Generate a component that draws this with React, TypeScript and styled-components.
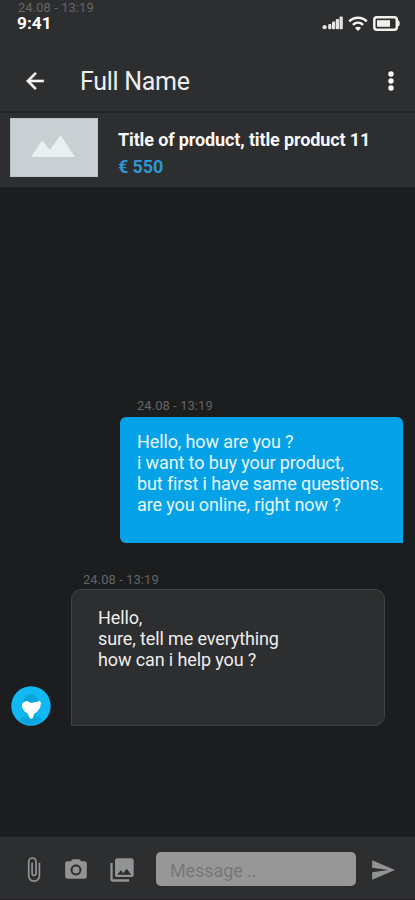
import React from "react";
import styled, { createGlobalStyle } from "styled-components";

const Global = createGlobalStyle`
  * { box-sizing: border-box; }
  body { margin: 0; background: #1c1d1e; font-family: Roboto, sans-serif; }
`;

const Screen = styled.main`
  width: 415px;
  height: 900px;
  display: flex;
  flex-direction: column;
  overflow: hidden;
  background: #1c1d1e;
`;

const Header = styled.header`
  height: 113px;
  flex: none;
  background: #2d2e2f;
  border-bottom: 2px solid #222324;
`;

const StatusBar = styled.div`
  height: 50px;
  padding: 1px 15px 0 17px;
  display: flex;
  justify-content: space-between;
`;

const Stamp = styled.time<{ $indent?: number }>`
  display: block;
  height: 14px;
  padding-left: ${(p) => p.$indent ?? 0}px;
  font-size: 12.9px;
  line-height: 14px;
  letter-spacing: 0.1px;
  color: #656667;
  white-space: nowrap;
`;

const Clock = styled.div`
  font-size: 17.3px;
  line-height: 17px;
  font-weight: 700;
  color: #fff;
`;

const StatusIcons = styled.div`
  display: flex;
  align-items: center;
  gap: 5px;
  height: 16px;
  margin-top: 14px;
`;

const NavBar = styled.nav`
  height: 61px;
  padding: 0 12px 0 22px;
  display: flex;
  align-items: center;
`;

const IconButton = styled.button`
  display: flex;
  padding: 0;
  border: 0;
  background: none;
  color: inherit;
`;

const Name = styled.h1`
  flex: 1;
  margin: 2px 0 0 32px;
  font-size: 25px;
  line-height: 30px;
  font-weight: 400;
  letter-spacing: -0.3px;
  color: #eee;
`;

const Product = styled.section`
  height: 74px;
  flex: none;
  display: flex;
  padding: 5px 10px;
  background: #2d2e2f;
`;

const Thumb = styled.div`
  width: 88px;
  height: 59px;
  display: flex;
  background: #c8d0d4;
  border: 1px solid #bcc2c5;
`;

const ProductInfo = styled.div`
  margin: 8px 0 0 20px;
  font-size: 18px;
  font-weight: 700;
  line-height: 27px;
  letter-spacing: -0.13px;
  white-space: nowrap;
`;

const Title = styled.div`
  color: #f7f7f7;
`;

const Price = styled.div`
  color: #2d96d3;
`;

const Chat = styled.section`
  flex: 1;
  padding: 212px 12px 0 11px;
`;

const Sent = styled.article`
  margin-left: 109px;
`;

const Bubble = styled.div<{ $own?: boolean }>`
  width: ${(p) => (p.$own ? 283 : 314)}px;
  height: ${(p) => (p.$own ? 126 : 137)}px;
  margin-top: ${(p) => (p.$own ? 4 : 2)}px;
  padding: ${(p) => (p.$own ? "14px 17px" : "17px 26px")};
  border: ${(p) => (p.$own ? "0" : "1px solid #404142")};
  border-radius: ${(p) => (p.$own ? "6px 6px 0 6px" : "10px 10px 10px 0")};
  background: ${(p) => (p.$own ? "#06a2e7" : "#2d2e2f")};
  color: ${(p) => (p.$own ? "#e6f6ff" : "#ededed")};
  font-size: 18px;
  line-height: 21px;
  letter-spacing: -0.12px;
  white-space: pre;
`;

const Received = styled.article`
  margin-top: 30px;
  display: flex;
  align-items: flex-end;
  gap: 20px;
`;

const Avatar = styled.div`
  width: 40px;
  height: 40px;
  display: flex;
`;

const Composer = styled.footer`
  height: 63px;
  flex: none;
  display: flex;
  align-items: center;
  padding: 1px 16px 0 20px;
  background: #2d2e2f;
  color: #929394;
  border-bottom: 1px solid #2b2028;
`;

const Tools = styled.div`
  display: flex;
  align-items: center;
  gap: 16px;
  padding-top: 2px;
`;

const GalleryButton = styled(IconButton)`
  margin-left: 3px;
`;

const Field = styled.input`
  width: 200px;
  height: 34px;
  margin: 1px 14px 0 20px;
  padding: 3px 13px 0 14px;
  border: 0;
  border-radius: 5px;
  background: #979797;
  font: 18px Roboto, sans-serif;
  letter-spacing: -0.1px;
  &::placeholder { color: #777; opacity: 1; }
`;

const SendButton = styled(IconButton)`
  margin-top: 2px;
`;

function Glyph({ d, size = 26 }: { d: string; size?: number }) {
  return (
    <svg width={size} height={size} viewBox="0 0 24 24" fill="currentColor">
      <path d={d} />
    </svg>
  );
}

const paths = {
  back: "M20 11H7.83l5.59-5.59L12 4l-8 8 8 8 1.41-1.41L7.83 13H20v-2z",
  clip: "M16.5 6v11.5c0 2.21-1.79 4-4 4s-4-1.79-4-4V5c0-1.38 1.12-2.5 2.5-2.5s2.5 1.12 2.5 2.5v10.5c0 .55-.45 1-1 1s-1-.45-1-1V6H10v9.5c0 1.38 1.12 2.5 2.5 2.5s2.5-1.12 2.5-2.5V5c0-2.21-1.79-4-4-4S7 2.79 7 5v12.5c0 3.04 2.46 5.5 5.5 5.5s5.5-2.46 5.5-5.5V6h-1.5z",
  camera: "M12 8.8a3.2 3.2 0 1 0 0 6.4 3.2 3.2 0 0 0 0-6.4zM9 2 7.17 4H4c-1.1 0-2 .9-2 2v12c0 1.1.9 2 2 2h16c1.1 0 2-.9 2-2V6c0-1.1-.9-2-2-2h-3.17L15 2H9zm3 15c-2.76 0-5-2.24-5-5s2.24-5 5-5 5 2.24 5 5-2.24 5-5 5z",
  gallery: "M22 16V4c0-1.1-.9-2-2-2H8c-1.1 0-2 .9-2 2v12c0 1.1.9 2 2 2h12c1.1 0 2-.9 2-2zm-11-4 2.03 2.71L16 11l4 5H8l3-4zM2 6v14c0 1.1.9 2 2 2h14v-2H4V6H2z",
  send: "M2.01 21 23 12 2.01 3 2 10l15 2-15 2z",
};

export default function App() {
  return (
    <>
      <Global />
      <Screen>
        <Header>
          <StatusBar>
            <div>
              <Stamp $indent={1}>24.08 - 13:19</Stamp>
              <Clock>9:41</Clock>
            </div>
            <StatusIcons>
              <svg width="21" height="14" viewBox="0 0 21 14" fill="#e4e4e4">
                <circle cx="2.6" cy="11.2" r="2.1" />
                <rect x="6.2" y="8" width="3.2" height="5.2" rx="1" />
                <rect x="10" y="5.5" width="3.2" height="7.7" rx="1" />
                <rect x="13.8" y="3" width="3.2" height="10.2" rx="1" />
                <rect x="17.5" y="0.5" width="3.3" height="12.7" rx="1" />
              </svg>
              <svg width="20" height="15" viewBox="0 0 20 15" fill="none" stroke="#f3f3f3">
                <path d="M1.2 5.3C6.3.4 13.7.4 18.8 5.3" strokeWidth="2.5" />
                <path d="M4.9 8.8C7.9 6 12.1 6 15.1 8.8" strokeWidth="2.5" />
                <path d="M7 12C8.8 10.2 11.2 10.2 13 12L10 15z" fill="#f3f3f3" stroke="none" />
              </svg>
              <svg width="27" height="15" viewBox="0 0 27 15">
                <rect x="1.3" y="1.3" width="22.5" height="12.4" rx="2.5" fill="none" stroke="#f1f1ec" strokeWidth="2.5" />
                <rect x="4" y="4.2" width="13" height="6.6" fill="#f1f1ec" />
                <path d="M24.5 4c1.8.4 2.2 2 2.2 3.4s-.4 2.9-2.2 3.3z" fill="#f1f1ec" />
              </svg>
            </StatusIcons>
          </StatusBar>
          <NavBar>
            <IconButton aria-label="Back">
              <svg width="26" height="26" viewBox="0 0 24 24" fill="#f4f4f4" stroke="#f4f4f4" strokeWidth=".5">
                <path d={paths.back} />
              </svg>
            </IconButton>
            <Name>Full Name</Name>
            <IconButton aria-label="More">
              <svg width="24" height="28" viewBox="0 0 24 28" fill="#fff">
                <circle cx="12" cy="7" r="2.7" />
                <circle cx="12" cy="14" r="2.7" />
                <circle cx="12" cy="21" r="2.7" />
              </svg>
            </IconButton>
          </NavBar>
        </Header>
        <Product>
          <Thumb>
            <svg width="86" height="57" viewBox="0 0 86 57" fill="#eaf0f1">
              <path d="M20 38L31 21.5 39 31 49.5 16 64 38z" />
            </svg>
          </Thumb>
          <ProductInfo>
            <Title>Title of product, title product 11</Title>
            <Price>€ 550</Price>
          </ProductInfo>
        </Product>
        <Chat>
          <Sent>
            <Stamp $indent={17}>24.08 - 13:19</Stamp>
            <Bubble $own>{"Hello, how are you ?\ni want to buy your product,\nbut first i have same questions.\nare you online, right now ?"}</Bubble>
          </Sent>
          <Received>
            <Avatar>
              <svg width="40" height="40" viewBox="0 0 40 40">
                <circle cx="20" cy="20" r="19.7" fill="#10b9f3" />
                <path d="M12.5 17c0-6 3-9 7.5-9s7.5 3 7.5 9l1 8-8.5 7-8.5-7zM9 34c1-3 4-4 7-4h8c3 0 6 1 7 4-6 6-16 6-22 0z" fill="#08a5dc" />
                <path d="M11 18l2-2 3-1 4 2 5-1 4-1 1 2-1 5-3 4-3 2-1 4-2 1-2-2-1-3-4-3-2-4z" fill="#fff" />
              </svg>
            </Avatar>
            <div>
              <Stamp $indent={12}>24.08 - 13:19</Stamp>
              <Bubble>{"Hello,\nsure, tell me everything\nhow can i help you ?"}</Bubble>
            </div>
          </Received>
        </Chat>
        <Composer>
          <Tools>
            <IconButton aria-label="Attach"><Glyph d={paths.clip} size={27} /></IconButton>
            <IconButton aria-label="Camera"><Glyph d={paths.camera} /></IconButton>
            <GalleryButton aria-label="Gallery"><Glyph d={paths.gallery} size={28} /></GalleryButton>
          </Tools>
          <Field placeholder="Message .." />
          <SendButton aria-label="Send"><Glyph d={paths.send} /></SendButton>
        </Composer>
      </Screen>
    </>
  );
}
